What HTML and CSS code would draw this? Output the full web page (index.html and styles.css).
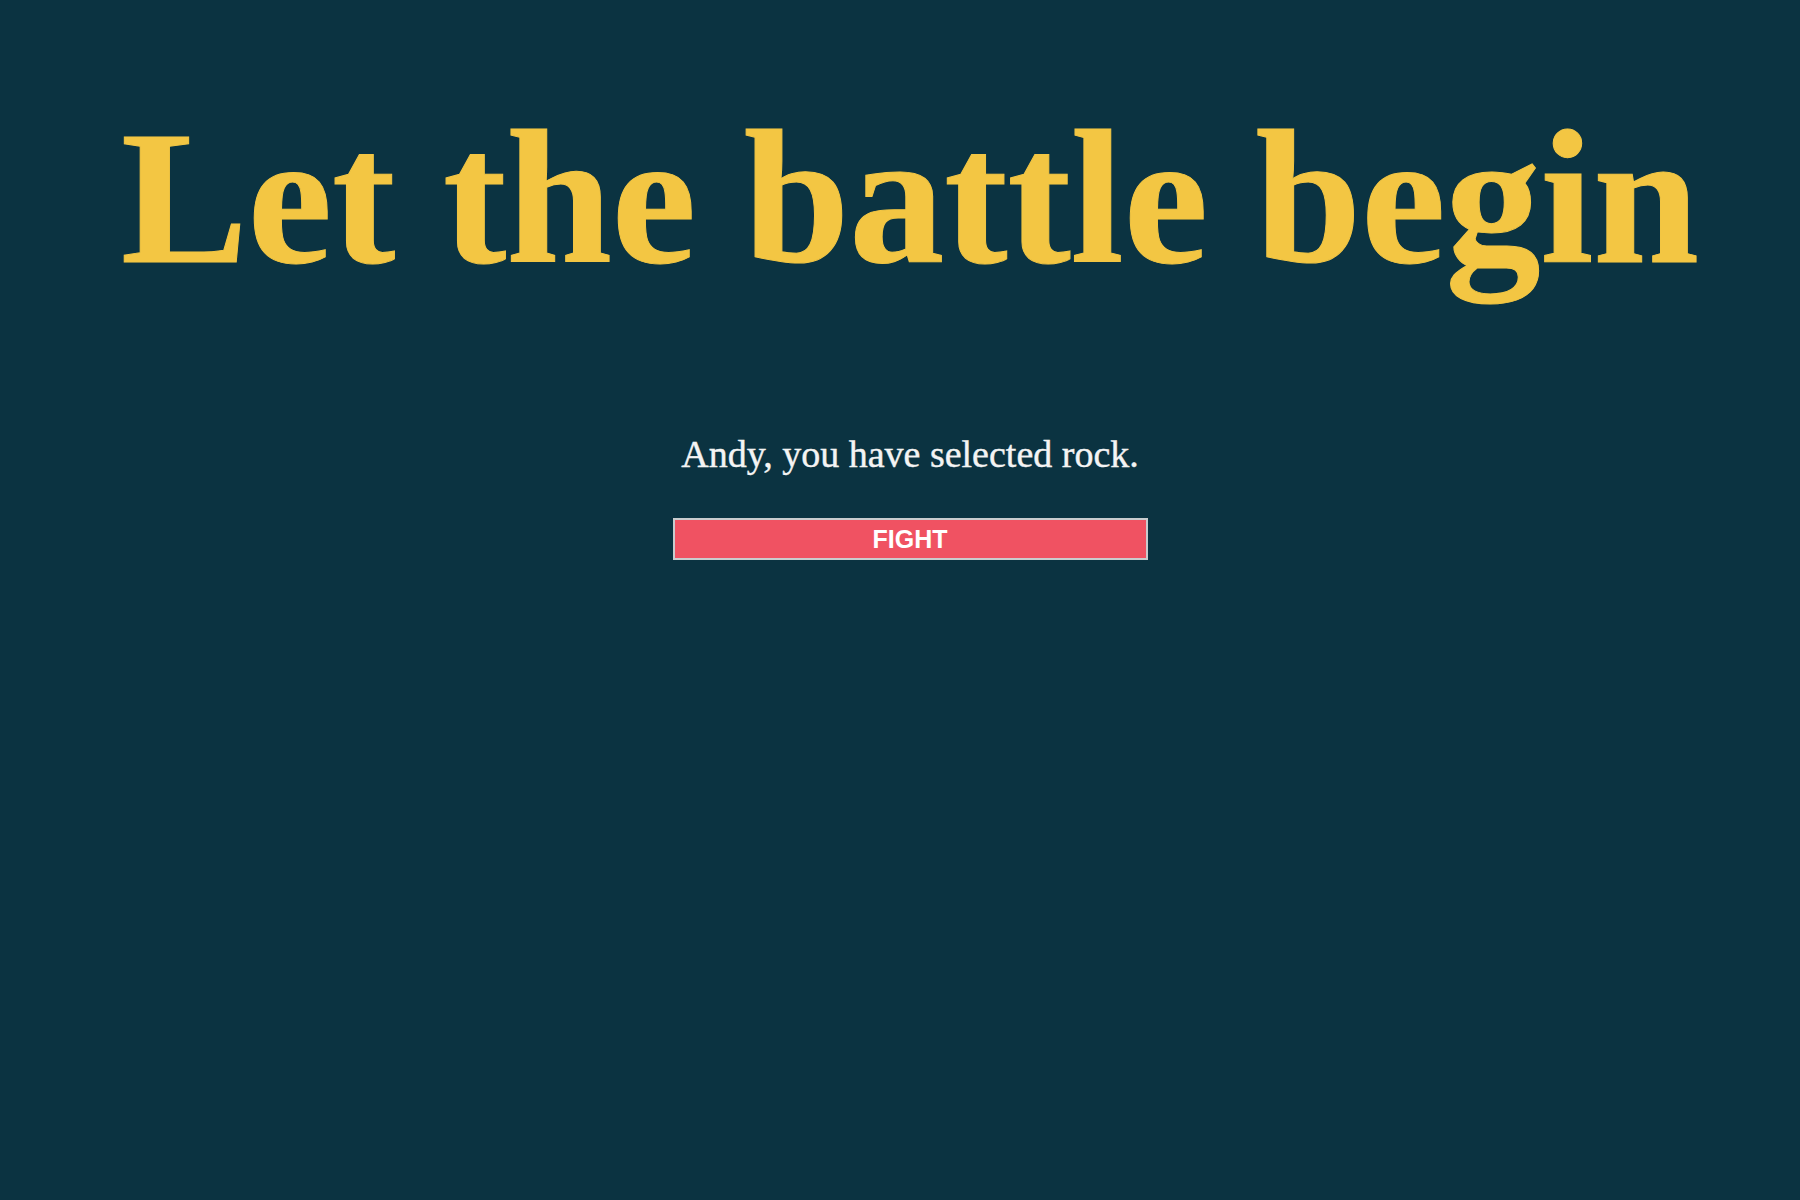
FILE: index.html
```html
<!DOCTYPE html>
<html>
<head>
<meta charset="utf-8">
<title>Battle</title>
<link rel="stylesheet" href="styles.css">
</head>
<body>
<main class="page">
  <h1 class="title">Let the battle begin</h1>
  <p class="message">Andy, you have selected rock.</p>
  <button class="fight">FIGHT</button>
</main>
</body>
</html>
```

FILE: styles.css
```css
html, body {
  margin: 0;
  padding: 0;
  background: #0b3341;
  height: 100%;
}
.page {
  display: flex;
  flex-direction: column;
  align-items: center;
  padding: 103px 0 0 20px;
}
.title {
  margin: 0;
  font-family: "Liberation Serif", "Times New Roman", serif;
  font-weight: bold;
  font-size: 190px;
  line-height: 1;
  color: #f3c643;
  white-space: nowrap;
  -webkit-text-stroke: 1px #f3c643;
}
.message {
  margin: 142px 0 0;
  font-family: "Liberation Serif", "Times New Roman", serif;
  font-size: 38px;
  line-height: 1;
  color: #f4f4f4;
  -webkit-text-stroke: 0.4px #f4f4f4;
}
.fight {
  margin-top: 45px;
  width: 475px;
  height: 42px;
  border: 2px solid #c9ccce;
  background: #f05262;
  color: #ffffff;
  font-family: "Liberation Sans", Arial, sans-serif;
  font-weight: bold;
  font-size: 25px;
  line-height: 1;
  padding: 0;
}
```
